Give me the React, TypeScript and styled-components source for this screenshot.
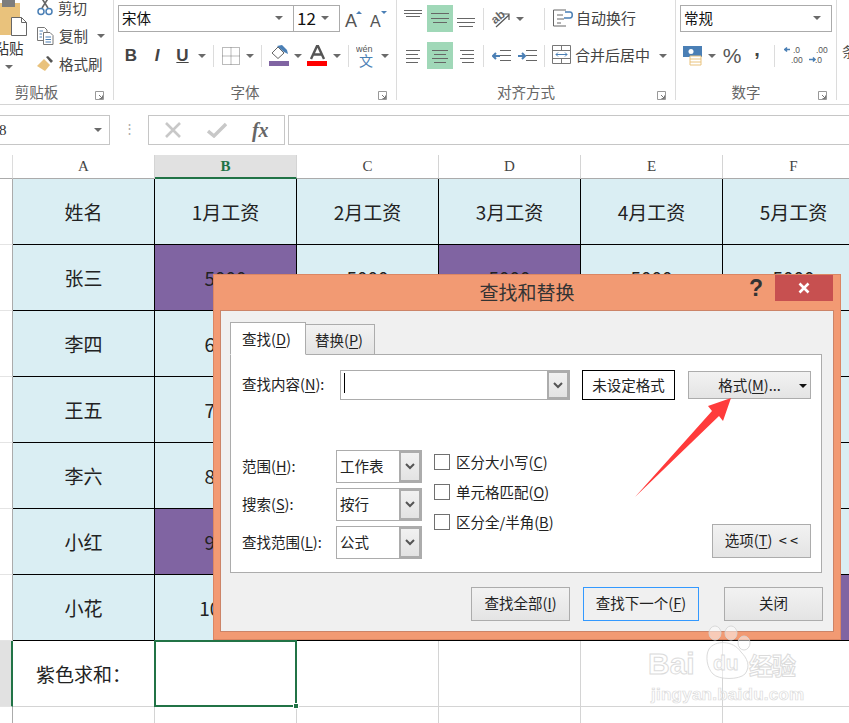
import React from 'react';
import styled, { createGlobalStyle } from 'styled-components';

const CJK = '"Noto Sans CJK SC", "Noto Sans", sans-serif';

const GlobalStyle = createGlobalStyle`
  html, body {
    margin: 0;
    padding: 0;
    background: #fff;
    overflow: hidden;
  }
  * {
    box-sizing: border-box;
  }
`;

const Page = styled.div`
  position: relative;
  width: 849px;
  height: 723px;
  overflow: hidden;
  background: #fff;
  font-family: ${CJK};
  color: #222;
`;

/* ribbon */

const Ribbon = styled.div`
  display: flex;
  height: 105px;
  border-bottom: 1px solid #d4d4d4;
  overflow: hidden;
`;

const Group = styled.div<{ $w: number; $ml?: number }>`
  flex: none;
  display: flex;
  flex-direction: column;
  width: ${(p) => p.$w}px;
  height: 100px;
  margin-left: ${(p) => p.$ml || 0}px;
  border-right: 1px solid #dcdcdc;
`;

const GroupBody = styled.div`
  flex: 1;
  display: flex;
  flex-direction: column;
  gap: 10px;
  padding-top: 5px;
`;

const GroupFooter = styled.div`
  display: flex;
  align-items: center;
  height: 20px;
  margin-bottom: -2px;
`;

const GroupLabel = styled.div`
  flex: 1;
  text-align: center;
  font-size: 14.5px;
  line-height: 20px;
  color: #666;
`;

const Launcher = styled.svg`
  width: 20px;
  height: 9px;
  margin-top: 7px;
`;

const ToolRow = styled.div<{ $pl?: number }>`
  display: flex;
  align-items: center;
  height: 27px;
  padding-left: ${(p) => p.$pl || 0}px;
`;

const Slot = styled.div<{ $w: number; $on?: boolean }>`
  flex: none;
  display: flex;
  align-items: center;
  justify-content: center;
  width: ${(p) => p.$w}px;
  height: 27px;
  background: ${(p) => (p.$on ? '#a0d8b8' : 'transparent')};
`;

const Sep = styled.div`
  width: 1px;
  height: 22px;
  background: #dcdcdc;
`;

const Caret = styled.div`
  width: 0;
  height: 0;
  border-left: 4px solid transparent;
  border-right: 4px solid transparent;
  border-top: 4px solid #6a6a6a;
`;

const FontField = styled.div<{ $w: number; $ml?: number; $size?: number }>`
  flex: none;
  display: flex;
  align-items: center;
  justify-content: space-between;
  width: ${(p) => p.$w}px;
  height: 27px;
  margin-left: ${(p) => p.$ml || 0}px;
  padding: 0 10px 2px 3px;
  border: 1px solid #ababab;
  font-size: ${(p) => p.$size || 14.5}px;
  color: #111;
`;

const StyleGlyph = styled.span<{ $italic?: boolean; $under?: boolean }>`
  font-family: "Liberation Sans", sans-serif;
  font-weight: 700;
  font-size: 17px;
  color: #444;
  font-style: ${(p) => (p.$italic ? 'italic' : 'normal')};
  text-decoration: ${(p) => (p.$under ? 'underline' : 'none')};
`;

const Percent = styled.span`
  font-family: "Liberation Sans", sans-serif;
  font-size: 21px;
  color: #555;
`;

const Comma = styled.span`
  margin-bottom: 12px;
  font-family: "Liberation Sans", sans-serif;
  font-weight: 700;
  font-size: 20px;
  color: #444;
`;

const WideTool = styled.div<{ $w: number; $pl: number }>`
  flex: none;
  display: flex;
  align-items: center;
  gap: 3px;
  width: ${(p) => p.$w}px;
  padding-left: ${(p) => p.$pl}px;
  padding-bottom: 2px;
  font-size: 15px;
  color: #444;
`;

const PasteColumn = styled.div`
  flex: none;
  display: flex;
  flex-direction: column;
  align-items: center;
  width: 58px;
  margin-top: -5px;
`;

const PasteIconBox = styled.svg`
  display: block;
`;

const PasteText = styled.div`
  margin-top: 4px;
  font-size: 14.5px;
  line-height: 16px;
  color: #333;
`;

const PasteCaret = styled(Caret)`
  margin-top: 9px;
`;

const ClipboardBody = styled.div`
  flex: 1;
  display: flex;
`;

const ClipList = styled.div`
  display: flex;
  flex-direction: column;
  margin-top: -6px;
  margin-left: -1px;
`;

const ClipItem = styled.div`
  display: flex;
  align-items: center;
  height: 28px;
  gap: 5px;
  padding-bottom: 1px;
  font-size: 14.5px;
  color: #444;
`;

const ClipCaret = styled(Caret)`
  margin-left: 4px;
`;

const CutOff = styled.div`
  flex: none;
  width: 12px;
  padding: 41px 0 0 5px;
  font-size: 14px;
  white-space: nowrap;
  color: #555;
`;

/* formula bar */

const FormulaBar = styled.div`
  display: flex;
  align-items: stretch;
  height: 30px;
  margin-top: 10px;
`;

const NameBox = styled.div`
  flex: none;
  display: flex;
  align-items: center;
  justify-content: space-between;
  width: 113px;
  margin-left: -3px;
  padding: 0 7px 0 1px;
  border: 1px solid #c6c6c6;
  font-family: "Liberation Serif", serif;
  font-size: 15px;
  color: #333;
`;

const BarDots = styled.div`
  flex: none;
  width: 38px;
  text-align: center;
  font-size: 13px;
  line-height: 26px;
  color: #aaa;
`;

const FxBox = styled.div`
  flex: none;
  display: flex;
  align-items: center;
  justify-content: space-around;
  width: 137px;
  padding: 0 3px;
  border: 1px solid #c6c6c6;
`;

const FxGlyph = styled.span`
  font-family: "Liberation Serif", serif;
  font-style: italic;
  font-weight: 700;
  font-size: 20px;
  color: #666;
`;

const FormulaInput = styled.div`
  flex: 1;
  margin-left: 3px;
  margin-right: -4px;
  border: 1px solid #c6c6c6;
`;

/* sheet */

const Sheet = styled.div`
  display: grid;
  grid-template-columns: 13px repeat(6, 142px);
  grid-auto-rows: 66px;
  grid-template-rows: 24px;
  margin-top: 10px;
`;

const Corner = styled.div`
  border-right: 1px solid #dcdcdc;
  border-bottom: 1px solid #ababab;
`;

const ColHead = styled.div<{ $on?: boolean }>`
  display: flex;
  align-items: center;
  justify-content: center;
  font-family: "Liberation Serif", serif;
  font-size: 15px;
  font-weight: ${(p) => (p.$on ? 700 : 400)};
  color: ${(p) => (p.$on ? '#217346' : '#444')};
  background: ${(p) => (p.$on ? '#e1e1e1' : '#fff')};
  border-right: 1px solid #d4d4d4;
  border-bottom: ${(p) => (p.$on ? '2px solid #217346' : '1px solid #ababab')};
`;

const RowHead = styled.div<{ $on?: boolean }>`
  background: ${(p) => (p.$on ? '#e1e1e1' : '#fff')};
  border-right: ${(p) => (p.$on ? '2px solid #217346' : '1px solid #ababab')};
  border-bottom: 1px solid #e4e4e4;
`;

const Cell = styled.div<{ $purple?: boolean }>`
  display: flex;
  align-items: center;
  justify-content: center;
  font-size: 19px;
  color: #222;
  background: ${(p) => (p.$purple ? '#8064a2' : '#daeef3')};
  border-right: 1px solid #000;
  border-bottom: 1px solid #000;
`;

const PlainCell = styled(Cell)`
  background: #fff;
  border-right: 1px solid #d4d4d4;
  border-bottom: 1px solid #d4d4d4;
`;

const SelectedCell = styled.div`
  position: relative;
  margin: -1px 0 0 -1px;
  border: 2px solid #217346;
`;

const FillHandle = styled.div`
  position: absolute;
  right: -4px;
  bottom: -4px;
  width: 6px;
  height: 6px;
  background: #217346;
  border: 1px solid #fff;
`;

/* dialog */

const Dialog = styled.div`
  position: absolute;
  left: 213px;
  top: 274px;
  z-index: 2;
  width: 628px;
  height: 366px;
  padding: 0 8px 8px;
  background: #f29a73;
  box-shadow: 0 0 0 1px rgba(190, 110, 80, 0.45) inset;
`;

const TitleBar = styled.div`
  display: grid;
  grid-template-columns: 1fr auto 1fr;
  height: 37px;
`;

const Title = styled.div`
  font-size: 19px;
  line-height: 36px;
  color: #333;
`;

const TitleControls = styled.div`
  display: flex;
  justify-content: flex-end;
  align-items: flex-start;
`;

const Help = styled.div`
  width: 36px;
  padding-right: 12px;
  text-align: right;
  font-family: "Liberation Sans", sans-serif;
  font-weight: 700;
  font-size: 23px;
  line-height: 29px;
  color: #333;
`;

const Close = styled.div`
  display: flex;
  align-items: center;
  justify-content: center;
  width: 58px;
  height: 26px;
  margin-top: 1px;
  background: #c75050;
`;

const DialogBody = styled.div`
  height: 320px;
  padding: 11px 11px 0 9px;
  background: #f0f0f0;
  box-shadow: 0 0 0 1px #cc8468;
`;

const Tabs = styled.div`
  position: relative;
  z-index: 1;
  display: flex;
  align-items: flex-end;
  height: 33px;
  margin-bottom: -1px;
`;

const Tab = styled.div<{ $active?: boolean }>`
  width: ${(p) => (p.$active ? 76 : 69)}px;
  height: ${(p) => (p.$active ? 33 : 31)}px;
  padding-left: ${(p) => (p.$active ? 11 : 9)}px;
  font-size: 14.5px;
  line-height: ${(p) => (p.$active ? 32 : 30)}px;
  background: ${(p) => (p.$active ? '#fff' : 'linear-gradient(#f2f2f2, #e4e4e4)')};
  border: 1px solid #acacac;
  border-left-width: ${(p) => (p.$active ? 1 : 0)}px;
  border-bottom-color: ${(p) => (p.$active ? '#fff' : '#acacac')};
`;

const Panel = styled.div`
  display: flex;
  flex-direction: column;
  width: 592px;
  height: 219px;
  padding: 15px 10px 0 11px;
  background: #fff;
  border: 1px solid #acacac;
`;

const TopRow = styled.div`
  display: flex;
  align-items: center;
  height: 30px;
`;

const Label = styled.div<{ $w: number }>`
  flex: none;
  width: ${(p) => p.$w}px;
  padding-bottom: 3px;
  font-size: 14.5px;
  white-space: nowrap;
`;

const Combo = styled.div<{ $w: number }>`
  flex: none;
  display: flex;
  align-items: stretch;
  width: ${(p) => p.$w}px;
  height: 30px;
  border: 1px solid #acacac;
  font-size: 14.5px;
`;

const ComboText = styled.div`
  flex: 1;
  padding-left: 3px;
  line-height: 29px;
`;

const TextCursor = styled.div`
  width: 1px;
  height: 20px;
  margin: 2px 0 0 0;
  background: #000;
`;

const ComboButton = styled.div`
  flex: none;
  display: flex;
  align-items: center;
  justify-content: center;
  width: 22px;
  background: linear-gradient(#f2f2f2, #e2e2e2);
  box-shadow: 0 0 0 2px #acacac inset;
`;

const FormatPreview = styled.div`
  flex: none;
  width: 93px;
  height: 30px;
  margin: 0 13px 0 12px;
  border: 1px solid #000;
  text-align: center;
  font-size: 14.5px;
  line-height: 27px;
`;

const DialogButton = styled.div<{ $w: number; $focus?: boolean }>`
  flex: none;
  width: ${(p) => p.$w}px;
  height: 34px;
  text-align: center;
  font-size: 14.5px;
  line-height: 30px;
  white-space: nowrap;
  background: ${(p) => (p.$focus ? '#f0f0f0' : 'linear-gradient(#f2f2f2, #e4e4e4)')};
  border: 1px solid ${(p) => (p.$focus ? '#3399ff' : '#acacac')};
`;

const NextButton = styled(DialogButton)`
  margin: 0 25px 0 13px;
`;

const FormatButton = styled(DialogButton)`
  position: relative;
  height: 28px;
  line-height: 25px;
`;

const MenuCaret = styled.div`
  position: absolute;
  right: 3px;
  top: 12px;
  border-left: 4px solid transparent;
  border-right: 4px solid transparent;
  border-top: 4px solid #111;
`;

const LowerRow = styled.div`
  display: flex;
  align-items: flex-end;
  margin-top: 50px;
`;

const Fields = styled.div`
  display: grid;
  grid-template-columns: 94px 86px;
  grid-auto-rows: 33px;
  row-gap: 5px;
  align-items: center;
`;

const SelectCombo = styled(Combo)`
  height: 33px;
`;

const Checks = styled.div`
  align-self: flex-start;
  display: flex;
  flex-direction: column;
  gap: 14px;
  margin-left: 12px;
  padding-top: 4px;
`;

const CheckRow = styled.div`
  display: flex;
  align-items: center;
  gap: 6px;
  height: 16px;
  font-size: 14.5px;
`;

const CheckText = styled.span`
  margin-top: -1px;
`;

const CheckBox = styled.div`
  width: 16px;
  height: 16px;
  background: #fff;
  border: 1px solid #707070;
`;

const OptionsButton = styled(DialogButton)`
  margin-left: auto;
  margin-bottom: 1px;
`;

const DialogFooter = styled.div`
  display: flex;
  justify-content: flex-end;
  margin-top: 14px;
  margin-right: -1px;
`;

const Accel = styled.span`
  text-decoration: underline;
  text-underline-offset: 2px;
`;

/* overlays */

const Arrow = styled.svg`
  position: absolute;
  left: 630px;
  top: 394px;
  z-index: 3;
`;

const Watermark = styled.div`
  position: absolute;
  left: 648px;
  top: 630px;
  z-index: 4;
  width: 170px;
  height: 76px;
  color: #fff;
  opacity: 0.9;
`;

const MarkLine = styled.div`
  display: flex;
  align-items: center;
  height: 56px;
  padding-top: 12px;
`;

const MarkBai = styled.span`
  width: 57px;
  font-family: "Liberation Sans", sans-serif;
  font-weight: 700;
  font-size: 30px;
  -webkit-text-stroke: 1px #d8d8d8;
`;

const MarkCn = styled.span`
  margin-left: -6px;
  font-size: 24px;
  letter-spacing: -1px;
  font-weight: 700;
  -webkit-text-stroke: 1px #d8d8d8;
`;

const MarkUrl = styled.div`
  padding-left: 3px;
  font-family: "Liberation Sans", sans-serif;
  font-size: 17px;
  font-weight: 700;
  line-height: 18px;
  letter-spacing: 0.25px;
  -webkit-text-stroke: 0.7px #d8d8d8;
`;

const PawSvg = styled.svg`
  flex: none;
  margin-top: -14px;
`;

const BLUE = '#4a7fb5';
const GRAY = '#666';

const Lines: React.FC<{ rows: [number, number, number][]; w?: number }> = ({ rows, w = 20 }) => (
  <svg width={w} height="27" viewBox={`0 0 ${w} 27`}>
    {rows.map(([x1, x2, y]) => (
      <line key={`${x1}-${y}`} x1={x1} x2={x2} y1={y + 0.5} y2={y + 0.5} stroke={GRAY} strokeWidth="1" />
    ))}
  </svg>
);

const Chevron = () => (
  <svg width="10" height="7" viewBox="0 0 10 7">
    <path d="M1 1 L5 5 L9 1" fill="none" stroke="#555" strokeWidth="2" />
  </svg>
);

const CornerMark = () => (
  <Launcher viewBox="0 0 20 9">
    <path d="M2.5 0.5 H10.5 V8.5 H2.5 Z" fill="none" stroke="#999" />
    <path d="M6 4 L9.5 7.5 M9.5 4.5 V7.5 H6.5" fill="none" stroke="#777" />
  </Launcher>
);

const PasteIcon = () => (
  <PasteIconBox width="44" height="41" viewBox="0 0 44 41">
    <rect x="0" y="8" width="33" height="32" fill="#e9c27c" />
    <rect x="15" y="0" width="13" height="12" fill="#7d7d7d" />
    <path d="M24.5 22.5 H34.5 L39.5 27.5 V40.5 H24.5 Z" fill="#fff" stroke="#666" />
    <path d="M34.5 22.5 V27.5 H39.5" fill="none" stroke="#666" />
  </PasteIconBox>
);

const ScissorsIcon = () => (
  <svg width="16" height="17" viewBox="0 0 16 17">
    <path d="M4 -2 L11 9 M12 -2 L5 9" stroke="#666" strokeWidth="1.6" fill="none" />
    <circle cx="4" cy="12.5" r="3" fill="none" stroke={BLUE} strokeWidth="1.5" />
    <circle cx="12" cy="12.5" r="3" fill="none" stroke={BLUE} strokeWidth="1.5" />
  </svg>
);

const CopyIcon = () => (
  <svg width="17" height="18" viewBox="0 0 17 18">
    <path d="M0.5 0.5 H7.5 L10 3 V13.5 H0.5 Z" fill="#fff" stroke="#777" />
    <path d="M6.5 5.5 H13 L16 8.5 V17.5 H6.5 Z" fill="#fff" stroke="#777" />
    <path d="M2.5 4 H6 M2.5 7 H5 M2.5 10 H5 M8.5 10 H14 M8.5 12.5 H14 M8.5 15 H14" stroke={BLUE} />
  </svg>
);

const BrushIcon = () => (
  <svg width="17" height="16" viewBox="0 0 17 16">
    <path d="M8 2 L14 8 L9 14 L1 9 Z" fill="#e9c27c" transform="translate(-1 1)" />
    <path d="M9 1 L11 0 L16 5 L14 7 Z" fill="#555" />
  </svg>
);

const BorderIcon = () => (
  <svg width="18" height="18" viewBox="0 0 18 18">
    <path d="M0.5 0.5 H17.5 V17.5 H0.5 Z M9 0.5 V17.5 M0.5 9 H17.5" fill="none" stroke="#777" strokeDasharray="1 1" />
  </svg>
);

const FillIcon = () => (
  <svg width="21" height="22" viewBox="0 0 21 22">
    <path d="M3 8 L9 2 L15 8 L9 13.5 Z" fill="#fff" stroke="#666" />
    <path d="M8 1 L13 0 L18 5 L19 9 L15 7 Z" fill={BLUE} />
    <rect x="0" y="16" width="20" height="5" fill="#8064a2" />
  </svg>
);

const FontColorIcon = () => (
  <svg width="21" height="22" viewBox="0 0 21 22">
    <path d="M4 14 L10.5 0 L17 14 M6.5 9.5 H14.5" fill="none" stroke="#555" strokeWidth="2.4" />
    <rect x="0" y="16" width="20" height="5" fill="#ff0000" />
  </svg>
);

const WenIcon = () => (
  <svg width="20" height="24" viewBox="0 0 20 24">
    <text x="0" y="8" fontSize="9" fontFamily="Liberation Sans" fill="#555">wén</text>
    <text x="3" y="22" fontSize="14" fontFamily="Noto Sans CJK SC" fill={BLUE}>文</text>
  </svg>
);

const GrowIcon: React.FC<{ down?: boolean; size: number }> = ({ down, size }) => (
  <svg width="20" height="22" viewBox="0 0 20 22">
    <text x="1" y="19" fontSize={size} fontFamily="Liberation Sans" fill="#555">A</text>
    <path d={down ? 'M12 3 H18 L15 6 Z' : 'M12 6 H18 L15 3 Z'} fill={BLUE} />
  </svg>
);

const OrientIcon = () => (
  <svg width="21" height="20" viewBox="0 0 21 20">
    <text x="1" y="13" fontSize="12" fontWeight="700" fontFamily="Liberation Sans" fill="#666" transform="rotate(-40 6 10)">ab</text>
    <path d="M5 18 L18 6 M12 5 H18 V11" fill="none" stroke="#555" strokeWidth="1.2" />
  </svg>
);

const IndentIcon: React.FC<{ flip?: boolean }> = ({ flip }) => (
  <svg width="19" height="12" viewBox="0 0 19 12">
    <path d="M8 0.5 H19 M8 5.5 H19 M8 10.5 H19" stroke={GRAY} />
    <path
      d={flip ? 'M0 6 H7 M4 3 L7 6 L4 9' : 'M1 6 H8 M4 3 L1 6 L4 9'}
      fill="none"
      stroke={BLUE}
      strokeWidth="2"
    />
  </svg>
);

const WrapIcon = () => (
  <svg width="20" height="18" viewBox="0 0 20 18">
    <path d="M0.5 1 H13 M0.5 1 V17 H13 M4 6 H10 M4 10 H11 M4 14 H8" fill="none" stroke="#666" />
    <path d="M11 9 H17 C20 9 20 3 17 3 H12" fill="none" stroke={BLUE} strokeWidth="1.5" />
  </svg>
);

const MergeIcon = () => (
  <svg width="20" height="20" viewBox="0 0 20 20">
    <path d="M0.5 0.5 H18.5 V18.5 H0.5 Z M0.5 5.5 H18.5 M0.5 13.5 H18.5 M9.5 0.5 V5.5 M9.5 13.5 V18.5" fill="none" stroke="#777" />
    <path d="M4 9.5 H15 M6 7.5 L4 9.5 L6 11.5 M13 7.5 L15 9.5 L13 11.5" fill="none" stroke={BLUE} />
  </svg>
);

const CurrencyIcon = () => (
  <svg width="20" height="20" viewBox="0 0 20 20">
    <rect x="0" y="0" width="19" height="11" fill={BLUE} />
    <circle cx="8" cy="5.5" r="2.5" fill="#fff" />
    <path d="M7 10 H18 V19 H7 Z" fill="#fff" stroke="#e9c27c" />
    <path d="M7 13 H18 M7 16 H18" stroke="#e9c27c" />
  </svg>
);

const DecimalIcon: React.FC<{ more?: boolean }> = ({ more }) => (
  <svg width="19" height="19" viewBox="0 0 19 19">
    <text x={more ? 9 : 7} y="7" fontSize="8.5" fontFamily="Liberation Sans" fill="#555">{more ? '.0' : '.00'}</text>
    <text x={more ? 7 : 6} y="17" fontSize="8.5" fontFamily="Liberation Sans" fill="#555">{more ? '.00' : '.0'}</text>
    <path d={more ? 'M0 3.5 H6 M3 1.5 L1 3.5 L3 5.5' : 'M0 13.5 H6 M4 11.5 L6 13.5 L4 15.5'} fill="none" stroke={BLUE} strokeWidth="1.6" />
  </svg>
);

const CancelMark = () => (
  <svg width="18" height="16" viewBox="0 0 18 16">
    <path d="M2 1 L16 15 M16 1 L2 15" stroke="#c8c8c8" strokeWidth="2.6" />
  </svg>
);

const CheckMark = () => (
  <svg width="20" height="16" viewBox="0 0 20 16">
    <path d="M1 9 L7 14 L19 2" fill="none" stroke="#c8c8c8" strokeWidth="3.4" />
  </svg>
);

const PawIcon = () => (
  <PawSvg width="50" height="66" viewBox="0 0 50 66">
    <g fill="rgba(255,255,255,0.55)" stroke="#d8d8d8" strokeWidth="1">
      <ellipse cx="10" cy="9" rx="6" ry="7" />
      <ellipse cx="26" cy="9" rx="6" ry="7" />
      <ellipse cx="39" cy="19" rx="6" ry="7" />
      <path d="M4 25 C10 16 28 16 36 28 C42 34 46 42 40 50 C34 56 14 56 8 50 C2 44 0 32 4 25 Z" />
    </g>
    <text x="8" y="46" fontSize="21" fontWeight="700" fontFamily="Liberation Sans" fill="#fff" stroke="#d8d8d8" strokeWidth="0.8">du</text>
  </PawSvg>
);

const A = ({ k }: { k: string }) => <>(<Accel>{k}</Accel>)</>;

const people = [
  { name: '张三', pay: ['5000', '5000', '5000', '5000', '5000'], purple: [0, 2] },
  { name: '李四', pay: ['6000', '6000', '6000', '6000', '6000'], purple: [] },
  { name: '王五', pay: ['7000', '7000', '7000', '7000', '7000'], purple: [] },
  { name: '李六', pay: ['8000', '8000', '8000', '8000', '8000'], purple: [] },
  { name: '小红', pay: ['9000', '9000', '9000', '9000', '9000'], purple: [0] },
  { name: '小花', pay: ['10000', '10000', '10000', '10000', '10000'], purple: [4] },
];

const App: React.FC = () => (
  <Page>
    <GlobalStyle />
    <Ribbon>
      <Group $w={134} $ml={-20}>
        <ClipboardBody>
          <PasteColumn>
            <PasteIcon />
            <PasteText>粘贴</PasteText>
            <PasteCaret />
          </PasteColumn>
          <ClipList>
            <ClipItem><ScissorsIcon />剪切</ClipItem>
            <ClipItem><CopyIcon />复制<ClipCaret /></ClipItem>
            <ClipItem><BrushIcon />格式刷</ClipItem>
          </ClipList>
        </ClipboardBody>
        <GroupFooter>
          <GroupLabel>剪贴板</GroupLabel>
          <CornerMark />
        </GroupFooter>
      </Group>

      <Group $w={283}>
        <GroupBody>
          <ToolRow>
            <FontField $w={176} $ml={4}>宋体<Caret /></FontField>
            <FontField $w={47} $ml={-1} $size={17}>12<Caret /></FontField>
            <Slot $w={28}><GrowIcon size={18} /></Slot>
            <Slot $w={22}><GrowIcon down size={16} /></Slot>
          </ToolRow>
          <ToolRow $pl={4}>
            <Slot $w={26}><StyleGlyph>B</StyleGlyph></Slot>
            <Slot $w={26}><StyleGlyph $italic>I</StyleGlyph></Slot>
            <Slot $w={25}><StyleGlyph $under>U</StyleGlyph></Slot>
            <Slot $w={14}><Caret /></Slot>
            <Slot $w={8}><Sep /></Slot>
            <Slot $w={27}><BorderIcon /></Slot>
            <Slot $w={12}><Caret /></Slot>
            <Slot $w={10}><Sep /></Slot>
            <Slot $w={26}><FillIcon /></Slot>
            <Slot $w={12}><Caret /></Slot>
            <Slot $w={27}><FontColorIcon /></Slot>
            <Slot $w={12}><Caret /></Slot>
            <Slot $w={10}><Sep /></Slot>
            <Slot $w={25}><WenIcon /></Slot>
            <Slot $w={14}><Caret /></Slot>
          </ToolRow>
        </GroupBody>
        <GroupFooter>
          <GroupLabel>字体</GroupLabel>
          <CornerMark />
        </GroupFooter>
      </Group>

      <Group $w={279}>
        <GroupBody>
          <ToolRow $pl={4}>
            <Slot $w={26}><Lines rows={[[0, 18, 5], [0, 18, 8], [2, 16, 11]]} /></Slot>
            <Slot $w={26} $on><Lines rows={[[1, 19, 8], [1, 19, 13], [3, 17, 17]]} /></Slot>
            <Slot $w={26}><Lines rows={[[1, 19, 13], [1, 19, 17], [3, 17, 21]]} /></Slot>
            <Slot $w={8}><Sep /></Slot>
            <Slot $w={28}><OrientIcon /></Slot>
            <Slot $w={9}><Caret /></Slot>
            <Slot $w={16} />
            <Slot $w={8}><Sep /></Slot>
            <WideTool $w={90} $pl={5}><WrapIcon />自动换行</WideTool>
          </ToolRow>
          <ToolRow $pl={4}>
            <Slot $w={26}><Lines rows={[[2, 16, 8], [2, 14, 12], [2, 16, 16], [2, 14, 20]]} /></Slot>
            <Slot $w={26} $on><Lines rows={[[2, 18, 8], [4, 16, 12], [2, 18, 16], [4, 16, 20]]} /></Slot>
            <Slot $w={26}><Lines rows={[[4, 18, 8], [6, 18, 12], [4, 18, 16], [6, 18, 20]]} /></Slot>
            <Slot $w={8}><Sep /></Slot>
            <Slot $w={28}><IndentIcon /></Slot>
            <Slot $w={25}><IndentIcon flip /></Slot>
            <Slot $w={8}><Sep /></Slot>
            <WideTool $w={108} $pl={4}><MergeIcon />合并后居中</WideTool>
            <Slot $w={14}><Caret /></Slot>
          </ToolRow>
        </GroupBody>
        <GroupFooter>
          <GroupLabel>对齐方式</GroupLabel>
          <CornerMark />
        </GroupFooter>
      </Group>

      <Group $w={161}>
        <GroupBody>
          <ToolRow>
            <FontField $w={152} $ml={4}>常规<Caret /></FontField>
          </ToolRow>
          <ToolRow $pl={3}>
            <Slot $w={27}><CurrencyIcon /></Slot>
            <Slot $w={12}><Caret /></Slot>
            <Slot $w={28}><Percent>%</Percent></Slot>
            <Slot $w={22}><Comma>,</Comma></Slot>
            <Slot $w={12}><Sep /></Slot>
            <Slot $w={26}><DecimalIcon more /></Slot>
            <Slot $w={25}><DecimalIcon /></Slot>
          </ToolRow>
        </GroupBody>
        <GroupFooter>
          <GroupLabel>数字</GroupLabel>
          <CornerMark />
        </GroupFooter>
      </Group>

      <CutOff>条件格式</CutOff>
    </Ribbon>

    <FormulaBar>
      <NameBox>8<Caret /></NameBox>
      <BarDots>⋮</BarDots>
      <FxBox>
        <CancelMark />
        <CheckMark />
        <FxGlyph>fx</FxGlyph>
      </FxBox>
      <FormulaInput />
    </FormulaBar>

    <Sheet>
      <Corner />
      {['A', 'B', 'C', 'D', 'E', 'F'].map((c) => (
        <ColHead key={c} $on={c === 'B'}>{c}</ColHead>
      ))}

      <RowHead />
      {['姓名', '1月工资', '2月工资', '3月工资', '4月工资', '5月工资'].map((t) => (
        <Cell key={t}>{t}</Cell>
      ))}

      {people.map((p) => (
        <React.Fragment key={p.name}>
          <RowHead />
          <Cell>{p.name}</Cell>
          {p.pay.map((v, i) => (
            <Cell key={i} $purple={p.purple.includes(i)}>{v}</Cell>
          ))}
        </React.Fragment>
      ))}

      <RowHead $on />
      <PlainCell>紫色求和：</PlainCell>
      <SelectedCell><FillHandle /></SelectedCell>
      <PlainCell /><PlainCell /><PlainCell /><PlainCell />

      <RowHead />
      <PlainCell /><PlainCell /><PlainCell /><PlainCell /><PlainCell /><PlainCell />
    </Sheet>

    <Dialog>
      <TitleBar>
        <div />
        <Title>查找和替换</Title>
        <TitleControls>
          <Help>?</Help>
          <Close>
            <svg width="12" height="12" viewBox="0 0 12 12">
              <path d="M1.5 1.5 L10.5 10.5 M10.5 1.5 L1.5 10.5" stroke="#fff" strokeWidth="2.6" />
            </svg>
          </Close>
        </TitleControls>
      </TitleBar>
      <DialogBody>
        <Tabs>
          <Tab $active>查找<A k="D" /></Tab>
          <Tab>替换<A k="P" /></Tab>
        </Tabs>
        <Panel>
          <TopRow>
            <Label $w={98}>查找内容<A k="N" />:</Label>
            <Combo $w={230}>
              <ComboText><TextCursor /></ComboText>
              <ComboButton><Chevron /></ComboButton>
            </Combo>
            <FormatPreview>未设定格式</FormatPreview>
            <FormatButton $w={123}>格式<A k="M" />...<MenuCaret /></FormatButton>
          </TopRow>
          <LowerRow>
            <Fields>
              <Label $w={94}>范围<A k="H" />:</Label>
              <SelectCombo $w={86}><ComboText>工作表</ComboText><ComboButton><Chevron /></ComboButton></SelectCombo>
              <Label $w={94}>搜索<A k="S" />:</Label>
              <SelectCombo $w={86}><ComboText>按行</ComboText><ComboButton><Chevron /></ComboButton></SelectCombo>
              <Label $w={94}>查找范围<A k="L" />:</Label>
              <SelectCombo $w={86}><ComboText>公式</ComboText><ComboButton><Chevron /></ComboButton></SelectCombo>
            </Fields>
            <Checks>
              <CheckRow><CheckBox /><CheckText>区分大小写<A k="C" /></CheckText></CheckRow>
              <CheckRow><CheckBox /><CheckText>单元格匹配<A k="O" /></CheckText></CheckRow>
              <CheckRow><CheckBox /><CheckText>区分全/半角<A k="B" /></CheckText></CheckRow>
            </Checks>
            <OptionsButton $w={99}>选项<A k="T" />&nbsp;&nbsp;&lt; &lt;</OptionsButton>
          </LowerRow>
        </Panel>
        <DialogFooter>
          <DialogButton $w={99}>查找全部<A k="I" /></DialogButton>
          <NextButton $w={116} $focus>查找下一个<A k="F" /></NextButton>
          <DialogButton $w={99}>关闭</DialogButton>
        </DialogFooter>
      </DialogBody>
    </Dialog>

    <Arrow width="106" height="108" viewBox="630 394 106 108">
      <polygon points="731,398 708,406 712,411 635,497 719,416 723,421" fill="#ff3b3b" />
    </Arrow>

    <Watermark>
      <MarkLine>
        <MarkBai>Bai</MarkBai>
        <PawIcon />
        <MarkCn>经验</MarkCn>
      </MarkLine>
      <MarkUrl>jingyan.baidu.com</MarkUrl>
    </Watermark>
  </Page>
);

export default App;
